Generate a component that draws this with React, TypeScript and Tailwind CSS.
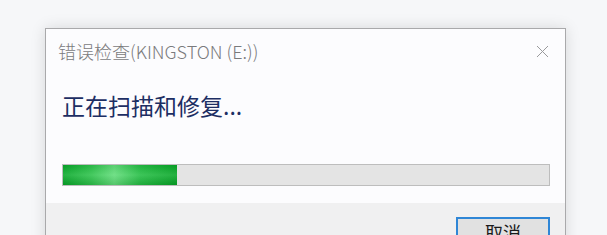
export default function App() {
  return (
    <div className="w-[607px] h-[235px] overflow-hidden bg-[#f6f7f9] pt-[28px] pl-[45px] font-['Noto_Sans_CJK_SC','Noto_Sans',sans-serif]">
      <div className="w-[521px] h-[230px] flex flex-col border border-[#a9a9ab] bg-[#fcfcfe] shadow-[0_0_14px_rgba(0,0,0,0.13)]">
        {/* title bar */}
        <div className="h-[44px] flex items-center justify-between pl-[12px] pr-[16px]">
          <span className="text-[18px] font-light text-[#7a7a7c]">错误检查(KINGSTON (E:))</span>
          <svg width="13" height="13" viewBox="0 0 13 13" className="text-[#9a9a9c]">
            <path d="M1 1 L12 12 M12 1 L1 12" stroke="currentColor" strokeWidth="1" fill="none" />
          </svg>
        </div>

        {/* content */}
        <div className="pl-[16px] pr-[14px]">
          <div className="mt-[16px] h-[32px] flex items-center text-[23px] leading-[32px] text-[#1d2e63]">
            正在扫描和修复...
          </div>
          <div className="mt-[43px] w-[488px] h-[22px] border border-[#bdbdbd] bg-[#e4e4e4]">
            <div className="relative w-[114px] h-full bg-[linear-gradient(90deg,#07a829_0%,#2cc24a_25%,#5fdc78_45%,#22bd42_68%,#06a626_100%)]">
              <div className="absolute inset-0 bg-[linear-gradient(180deg,rgba(0,0,0,0.06)_0%,rgba(255,255,255,0.12)_50%,rgba(0,0,0,0.1)_100%)]" />
            </div>
          </div>
        </div>

        {/* footer */}
        <div className="mt-[17px] flex-1 bg-[#f0f0f1] flex justify-end pr-[15px] pt-[14px]">
          <button className="w-[94px] h-[28px] border-2 border-[#2f86d6] bg-[#e1e1e1] text-[18px] leading-[26px] text-[#1a1a1a]">
            取消
          </button>
        </div>
      </div>
    </div>
  )
}
